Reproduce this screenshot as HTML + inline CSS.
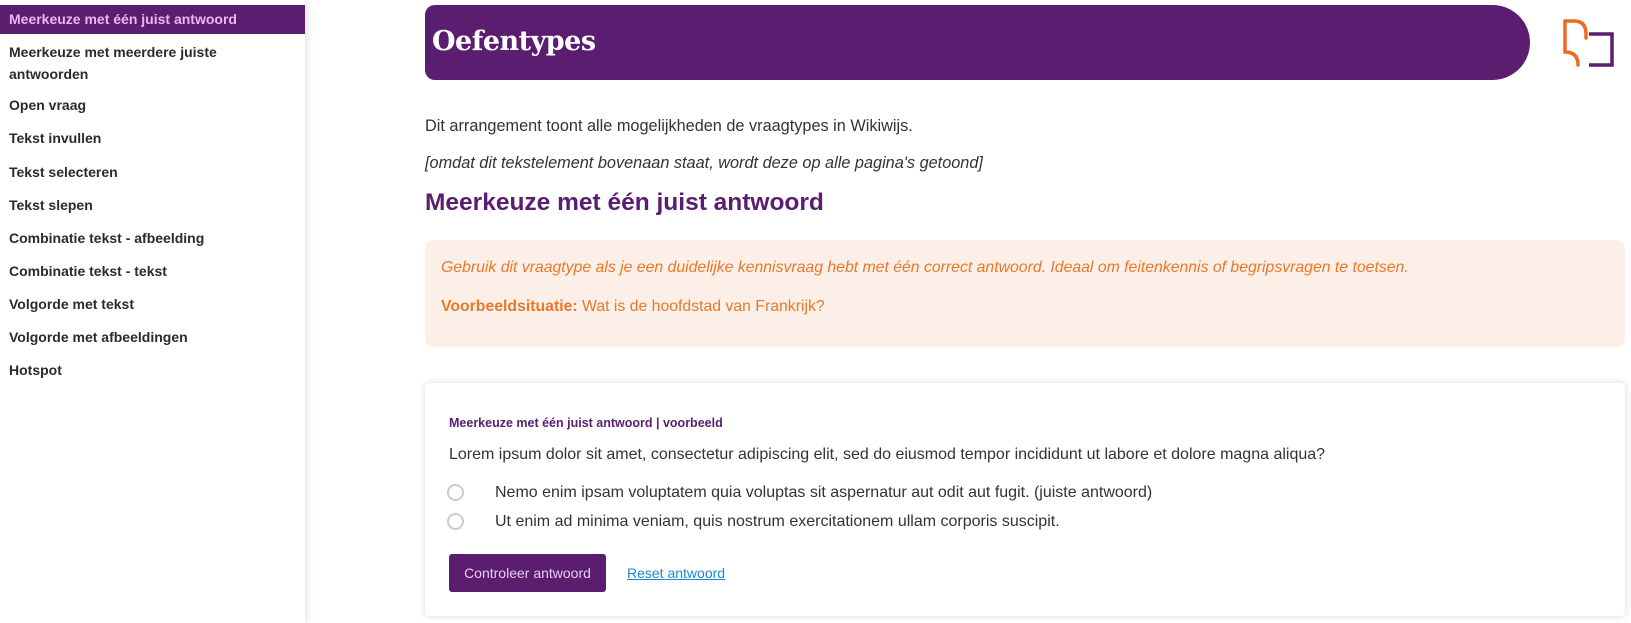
<!DOCTYPE html>
<html><head><meta charset="utf-8"><style>
*{margin:0;padding:0;box-sizing:border-box}
body{width:1631px;height:623px;overflow:hidden;background:#fff;font-family:"Liberation Sans",sans-serif;color:#333;position:relative}
.side{position:absolute;left:0;top:0;width:305px;height:623px;background:#fff;box-shadow:2px 0 8px rgba(0,0,0,.12)}
.side div{position:absolute;left:9px;font-weight:bold;font-size:14px;color:#2b2b2b;line-height:22px}
.side .act{left:0;width:305px;top:5px;height:29px;background:#5a1d6f;color:#e9b8ef;padding-left:9px;line-height:29px}
.a{position:absolute}
.hdr{left:425px;top:5px;width:1105px;height:75px;background:#5a1d6f;border-radius:10px 38px 38px 10px / 10px 38px 38px 10px}
.hdr span{position:absolute;left:7px;top:21px;color:#fff;font:bold 27px "DejaVu Serif","Liberation Serif",serif;letter-spacing:-0.5px}
p.t{position:absolute;left:425px;font-size:16px;color:#333}
.box{left:425px;top:240px;width:1200px;height:107px;background:#fcefe7;border-radius:8px}
.card{left:425px;top:383px;width:1200px;height:233px;background:#fff;border-radius:5px;box-shadow:0 0 8px rgba(0,0,0,.15)}
.radio{position:absolute;width:17px;height:17px;border:2px solid #ccc;border-radius:50%}
</style></head><body>
<div class="side">
<div class="act">Meerkeuze met één juist antwoord</div>
<div style="top:41px">Meerkeuze met meerdere juiste<br>antwoorden</div>
<div style="top:94px">Open vraag</div>
<div style="top:127px">Tekst invullen</div>
<div style="top:161px">Tekst selecteren</div>
<div style="top:194px">Tekst slepen</div>
<div style="top:227px">Combinatie tekst - afbeelding</div>
<div style="top:260px">Combinatie tekst - tekst</div>
<div style="top:293px">Volgorde met tekst</div>
<div style="top:326px">Volgorde met afbeeldingen</div>
<div style="top:359px">Hotspot</div>
</div>
<div class="a hdr"><span>Oefentypes</span></div>
<svg class="a" style="left:1558px;top:16px" width="62" height="54" viewBox="0 0 62 54">
<path d="M7 5 H16 Q28 5 28 18 V22" fill="none" stroke="#ee6a22" stroke-width="3.5" stroke-linecap="round"/>
<path d="M7 5 V36 Q20 36 20 49" fill="none" stroke="#ee6a22" stroke-width="3.5" stroke-linecap="round"/>
<path d="M31 18 H54 V49 H31" fill="none" stroke="#5a1d6f" stroke-width="3.5"/>
</svg>
<p class="t" style="top:117px;font-size:16.3px">Dit arrangement toont alle mogelijkheden de vraagtypes in Wikiwijs.</p>
<p class="t" style="top:154px;font-style:italic;font-size:16.3px">[omdat dit tekstelement bovenaan staat, wordt deze op alle pagina's getoond]</p>
<p class="t" style="top:189px;font-size:24.5px;font-weight:bold;color:#5a1d6f">Meerkeuze met één juist antwoord</p>
<div class="a box"></div>
<p class="t" style="top:259px;left:441px;font-style:italic;color:#e8792a;font-size:15.8px">Gebruik dit vraagtype als je een duidelijke kennisvraag hebt met één correct antwoord. Ideaal om feitenkennis of begripsvragen te toetsen.</p>
<p class="t" style="top:298px;left:441px;color:#e8792a;font-size:15.8px"><b>Voorbeeldsituatie:</b> Wat is de hoofdstad van Frankrijk?</p>
<div class="a card"></div>
<p class="t" style="top:416px;left:449px;font-size:12.5px;font-weight:bold;color:#5a1d6f">Meerkeuze met één juist antwoord | voorbeeld</p>
<p class="t" style="top:446px;left:449px;font-size:16px">Lorem ipsum dolor sit amet, consectetur adipiscing elit, sed do eiusmod tempor incididunt ut labore et dolore magna aliqua?</p>
<div class="radio" style="left:447px;top:484px"></div>
<p class="t" style="top:484px;left:495px;font-size:16px">Nemo enim ipsam voluptatem quia voluptas sit aspernatur aut odit aut fugit. (juiste antwoord)</p>
<div class="radio" style="left:447px;top:513px"></div>
<p class="t" style="top:513px;left:495px;font-size:16px">Ut enim ad minima veniam, quis nostrum exercitationem ullam corporis suscipit.</p>
<div class="a" style="left:449px;top:554px;width:157px;height:38px;background:#5a1d6f;border-radius:3px;color:#e9cdef;font-size:14px;line-height:38px;text-align:center">Controleer antwoord</div>
<p class="t" style="top:565px;left:627px;font-size:14px;color:#1a8ad4;text-decoration:underline">Reset antwoord</p>
</body></html>
